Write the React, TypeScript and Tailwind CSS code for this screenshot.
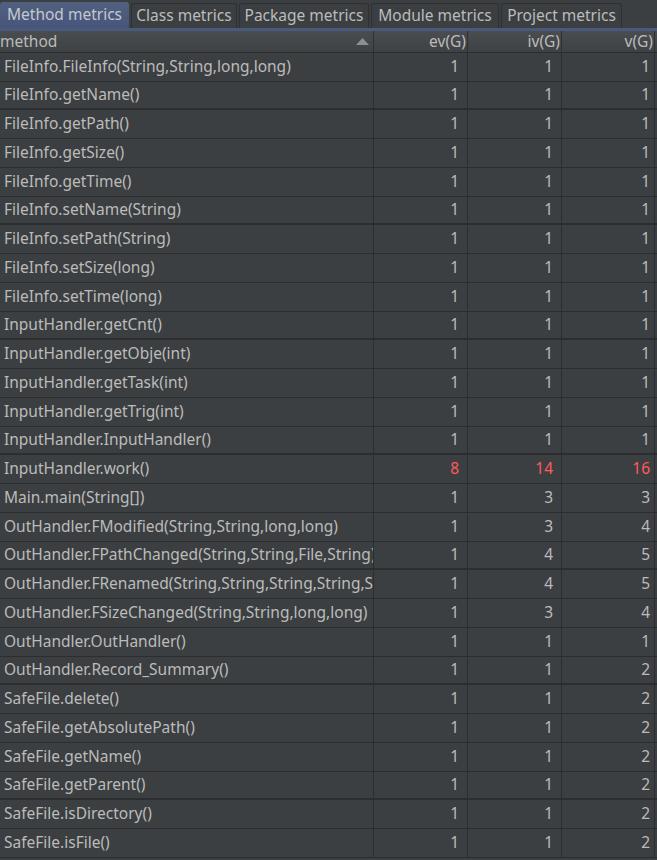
import React from 'react';

type Row = { name: string; ev: number; iv: number; v: number; hot?: boolean };

const rows: Row[] = [
  { name: 'FileInfo.FileInfo(String,String,long,long)', ev: 1, iv: 1, v: 1 },
  { name: 'FileInfo.getName()', ev: 1, iv: 1, v: 1 },
  { name: 'FileInfo.getPath()', ev: 1, iv: 1, v: 1 },
  { name: 'FileInfo.getSize()', ev: 1, iv: 1, v: 1 },
  { name: 'FileInfo.getTime()', ev: 1, iv: 1, v: 1 },
  { name: 'FileInfo.setName(String)', ev: 1, iv: 1, v: 1 },
  { name: 'FileInfo.setPath(String)', ev: 1, iv: 1, v: 1 },
  { name: 'FileInfo.setSize(long)', ev: 1, iv: 1, v: 1 },
  { name: 'FileInfo.setTime(long)', ev: 1, iv: 1, v: 1 },
  { name: 'InputHandler.getCnt()', ev: 1, iv: 1, v: 1 },
  { name: 'InputHandler.getObje(int)', ev: 1, iv: 1, v: 1 },
  { name: 'InputHandler.getTask(int)', ev: 1, iv: 1, v: 1 },
  { name: 'InputHandler.getTrig(int)', ev: 1, iv: 1, v: 1 },
  { name: 'InputHandler.InputHandler()', ev: 1, iv: 1, v: 1 },
  { name: 'InputHandler.work()', ev: 8, iv: 14, v: 16, hot: true },
  { name: 'Main.main(String[])', ev: 1, iv: 3, v: 3 },
  { name: 'OutHandler.FModified(String,String,long,long)', ev: 1, iv: 3, v: 4 },
  { name: 'OutHandler.FPathChanged(String,String,File,String)', ev: 1, iv: 4, v: 5 },
  { name: 'OutHandler.FRenamed(String,String,String,String,String)', ev: 1, iv: 4, v: 5 },
  { name: 'OutHandler.FSizeChanged(String,String,long,long)', ev: 1, iv: 3, v: 4 },
  { name: 'OutHandler.OutHandler()', ev: 1, iv: 1, v: 1 },
  { name: 'OutHandler.Record_Summary()', ev: 1, iv: 1, v: 2 },
  { name: 'SafeFile.delete()', ev: 1, iv: 1, v: 2 },
  { name: 'SafeFile.getAbsolutePath()', ev: 1, iv: 1, v: 2 },
  { name: 'SafeFile.getName()', ev: 1, iv: 1, v: 2 },
  { name: 'SafeFile.getParent()', ev: 1, iv: 1, v: 2 },
  { name: 'SafeFile.isDirectory()', ev: 1, iv: 1, v: 2 },
  { name: 'SafeFile.isFile()', ev: 1, iv: 1, v: 2 },
];

const tabs = [
  { label: 'Method metrics', w: 'w-[129px]' },
  { label: 'Class metrics', w: 'w-[106px]' },
  { label: 'Package metrics', w: 'w-[130px]' },
  { label: 'Module metrics', w: 'w-[128px]' },
  { label: 'Project metrics', w: 'w-[121px]' },
];

export default function App() {
  return (
    <div
      className="w-[657px] h-[860px] bg-[#3c3f41] text-[#bbbbbb] text-[15.5px] overflow-hidden"
      style={{ fontFamily: '"Noto Sans", "Open Sans", sans-serif' }}
    >
      {/* tab strip */}
      <div className="h-[28px] flex items-end gap-[2px] bg-[#3c3f41]">
        {tabs.map((t, i) =>
          i === 0 ? (
            <div
              key={t.label}
              className={`${t.w} h-[26px] flex items-center justify-center rounded-t-[3px] bg-gradient-to-b from-[#52617f] to-[#46557a] text-[#c4c8d0] whitespace-nowrap`}
            >
              {t.label}
            </div>
          ) : (
            <div
              key={t.label}
              className={`${t.w} h-[25px] flex items-center justify-center rounded-t-[3px] border border-b-0 border-[#2e3032] bg-[#3c3f41] whitespace-nowrap`}
            >
              {t.label}
            </div>
          )
        )}
      </div>
      <div className="h-[3px] bg-[#4a5a7c]" />

      {/* header */}
      <div className="h-[22px] flex bg-gradient-to-b from-[#4a4d4f] to-[#3f4244] border-b border-[#2b2d2e] leading-none">
        <div className="w-[374px] flex items-center justify-between border-r border-[#2e3032] pr-[4px]">
          <span>method</span>
          <svg width="13" height="7" viewBox="0 0 13 7">
            <polygon points="6.5,0 13,7 0,7" fill="#8c8f91" />
          </svg>
        </div>
        <div className="w-[94px] flex items-center justify-end border-r border-[#2e3032] pr-[1px]">ev(G)</div>
        <div className="w-[94px] flex items-center justify-end border-r border-[#2e3032] pr-[1px]">iv(G)</div>
        <div className="w-[93px] flex items-center justify-end border-r border-[#2e3032] pr-[1px]">v(G)</div>
      </div>

      {/* body */}
      <div>
        {rows.map((r, i) => {
          const thick = i % 4 === 1;
          const num = r.hot ? 'text-[#ff5a5a]' : '';
          return (
            <div
              key={r.name}
              className={`flex ${thick ? 'h-[28px] border-b-2' : 'h-[29px] border-b'} border-[#2b2d2f]`}
            >
              <div className="w-[374px] flex items-center pl-[4px] border-r border-[#2b2d2f] overflow-hidden whitespace-nowrap">
                {r.name}
              </div>
              <div className={`w-[94px] flex items-center justify-end pr-[8px] border-r border-[#2b2d2f] ${num}`}>{r.ev}</div>
              <div className={`w-[94px] flex items-center justify-end pr-[8px] border-r border-[#2b2d2f] ${num}`}>{r.iv}</div>
              <div className={`w-[93px] flex items-center justify-end pr-[4px] border-r border-[#2b2d2f] ${num}`}>{r.v}</div>
            </div>
          );
        })}
      </div>
    </div>
  );
}
